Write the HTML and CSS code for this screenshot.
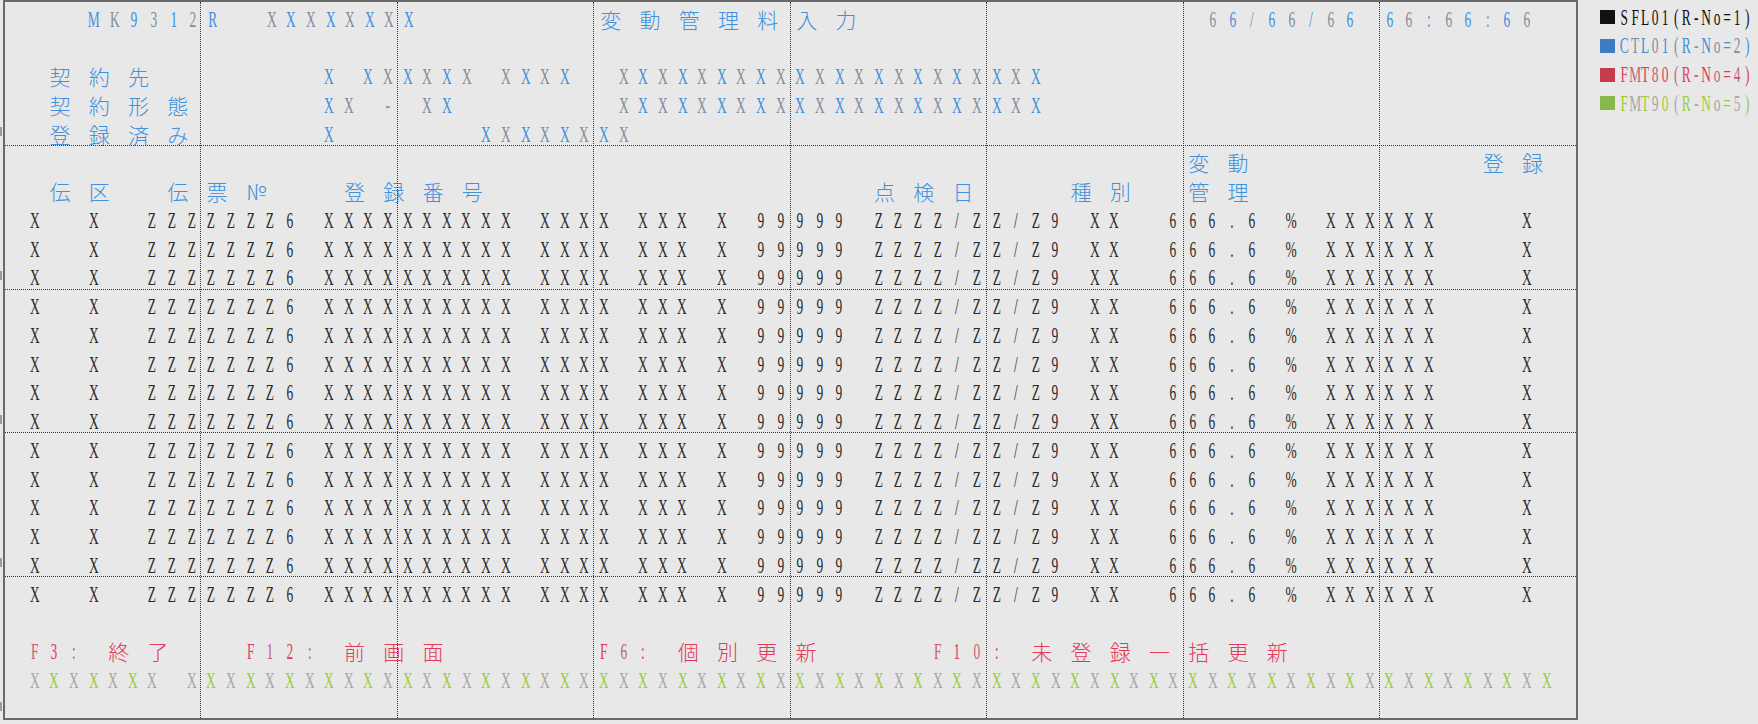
FILE: index.html
```html
<!DOCTYPE html>
<html lang="ja">
<head>
<meta charset="utf-8">
<title>MK9312R 変動管理料入力</title>
<link rel="stylesheet" href="styles.css">
</head>
<body>
<div class="page">
  <div class="ruler"><i></i><i></i><i></i><i></i><i></i></div>
  <div class="screen">
    <div class="vlines"><i></i><i></i><i></i><i></i><i></i><i></i><i></i><i></i></div>
    <div class="hlines"><i></i><i></i><i></i><i></i></div>
    <div class="line blue">    MK9312R  XXXXXXXX         変動管理料入力                 66/66/66 66:66:66</div>
    <div class="line"></div>
    <div class="line blue">  契約先        X XXXXXX XXXX  XXXXXXXXXXXXXXXXXXXXXX</div>
    <div class="line blue">  契約形態      XX - XX        XXXXXXXXXXXXXXXXXXXXXX</div>
    <div class="line blue">  登録済み      X       XXXXXXXX</div>
    <div class="line blue">                                                            変動           登録</div>
    <div class="line blue">  伝区  伝票№   登録番号                   点検日    種別  管理</div>
    <div class="line dark"> X  X  ZZZZZZZ6 XXXXXXXXXX XXXX XXX X 99999 ZZZZ/ZZ/Z9 XX  666.6 % XXXXXX    X</div>
    <div class="line dark"> X  X  ZZZZZZZ6 XXXXXXXXXX XXXX XXX X 99999 ZZZZ/ZZ/Z9 XX  666.6 % XXXXXX    X</div>
    <div class="line dark"> X  X  ZZZZZZZ6 XXXXXXXXXX XXXX XXX X 99999 ZZZZ/ZZ/Z9 XX  666.6 % XXXXXX    X</div>
    <div class="line dark"> X  X  ZZZZZZZ6 XXXXXXXXXX XXXX XXX X 99999 ZZZZ/ZZ/Z9 XX  666.6 % XXXXXX    X</div>
    <div class="line dark"> X  X  ZZZZZZZ6 XXXXXXXXXX XXXX XXX X 99999 ZZZZ/ZZ/Z9 XX  666.6 % XXXXXX    X</div>
    <div class="line dark"> X  X  ZZZZZZZ6 XXXXXXXXXX XXXX XXX X 99999 ZZZZ/ZZ/Z9 XX  666.6 % XXXXXX    X</div>
    <div class="line dark"> X  X  ZZZZZZZ6 XXXXXXXXXX XXXX XXX X 99999 ZZZZ/ZZ/Z9 XX  666.6 % XXXXXX    X</div>
    <div class="line dark"> X  X  ZZZZZZZ6 XXXXXXXXXX XXXX XXX X 99999 ZZZZ/ZZ/Z9 XX  666.6 % XXXXXX    X</div>
    <div class="line dark"> X  X  ZZZZZZZ6 XXXXXXXXXX XXXX XXX X 99999 ZZZZ/ZZ/Z9 XX  666.6 % XXXXXX    X</div>
    <div class="line dark"> X  X  ZZZZZZZ6 XXXXXXXXXX XXXX XXX X 99999 ZZZZ/ZZ/Z9 XX  666.6 % XXXXXX    X</div>
    <div class="line dark"> X  X  ZZZZZZZ6 XXXXXXXXXX XXXX XXX X 99999 ZZZZ/ZZ/Z9 XX  666.6 % XXXXXX    X</div>
    <div class="line dark"> X  X  ZZZZZZZ6 XXXXXXXXXX XXXX XXX X 99999 ZZZZ/ZZ/Z9 XX  666.6 % XXXXXX    X</div>
    <div class="line dark"> X  X  ZZZZZZZ6 XXXXXXXXXX XXXX XXX X 99999 ZZZZ/ZZ/Z9 XX  666.6 % XXXXXX    X</div>
    <div class="line dark"> X  X  ZZZZZZZ6 XXXXXXXXXX XXXX XXX X 99999 ZZZZ/ZZ/Z9 XX  666.6 % XXXXXX    X</div>
    <div class="line"></div>
    <div class="line red"> F3: 終了   F12: 前画面       F6: 個別更新     F10: 未登録一括更新</div>
    <div class="line green"> XXXXXXX X<!-- col 10 -->XXXXXXXXXX<!-- col 20 -->XXXXXXXXXX<!-- col 30 -->XXXXXXXXXX<!-- col 40 -->XXXXXXXXXX<!-- col 50 -->XXXXXXXXXX<!-- col 60 -->XXXXXXXXXX<!-- col 70 -->XXXXXXXXX</div>
  </div>
  <ul class="legend">
    <li class="legend-item"><span class="swatch sw-black"></span><span class="line dark">SFL01(R-No=1)</span></li>
    <li class="legend-item"><span class="swatch sw-blue"></span><span class="line blue">CTL01(R-No=2)</span></li>
    <li class="legend-item"><span class="swatch sw-red"></span><span class="line red">FMT80(R-No=4)</span></li>
    <li class="legend-item"><span class="swatch sw-green"></span><span class="line green">FMT90(R-No=5)</span></li>
  </ul>
</div>
<script src="script.js"></script>
</body>
</html>
```
FILE: styles.css
```css
* { box-sizing: border-box; }

html, body { margin: 0; padding: 0; }

body {
  background: #e8e8e8;
  font-family: "Liberation Serif", "Noto Sans CJK JP", serif;
}

.page {
  display: flex;
  align-items: flex-start;
  width: 1758px;
  height: 724px;
  overflow: hidden;
}

/* small row markers at the very left edge */
.ruler {
  width: 3px;
  flex: none;
  display: flex;
  flex-direction: column;
  gap: 134.75px;
  padding-top: 127px;
}
.ruler i {
  display: block;
  width: 2px;
  height: 9px;
  background: #9c9c9c;
}

/* 5250 screen frame: 80 columns x 24 rows */
.screen {
  position: relative;
  flex: none;
  width: 1574.8px;
  height: 720px;
  border: 2px solid #6a6a6a;
}

.vlines, .hlines {
  position: absolute;
  inset: 0;
  pointer-events: none;
}
.vlines { display: flex; }
.vlines i {
  flex: 1;
  border-right: 1px dotted #333333;
}
.vlines i:last-child { border-right: none; }

.hlines { display: flex; flex-direction: column; }
.hlines i {
  display: block;
  height: 143.75px;
  border-bottom: 1px dotted #333333;
}

.line {
  display: grid;
  grid-template-columns: repeat(80, 1fr);
  height: 28.75px;
}

.ch {
  grid-row: 1;
  display: flex;
  justify-content: center;
  padding-top: 5.5px;
  line-height: 22.75px;
  font-size: 24px;
  white-space: pre;
  transform: scaleX(0.56);
}
.ch.wide {
  font-family: "Noto Sans CJK JP", sans-serif;
  font-weight: 300;
  font-size: 21px;
  padding-right: 8px;
  transform: none;
}

.dark { color: #2a2a2a; }
.blue { color: #4090dc; }
.blue .odd { color: #828d99; }
.red { color: #e23a58; }
.red .odd { color: #c4606f; }
.green { color: #9ccc3a; }
.green .odd { color: #a6a6a6; }

/* legend of record formats */
.legend {
  list-style: none;
  margin: 0 0 0 22.7px;
  padding: 0;
  display: flex;
  flex-direction: column;
}
.legend-item {
  display: flex;
  align-items: flex-start;
  height: 28.75px;
}
.swatch {
  width: 15px;
  height: 14px;
  margin-top: 10px;
  margin-right: 4px;
  flex: none;
}
.sw-black { background: #111111; }
.sw-blue { background: #3d7cc0; }
.sw-red { background: #c43c4e; }
.sw-green { background: #88b84c; }

.legend .line {
  grid-template-columns: repeat(13, 10.26px);
}
.legend .dark { color: #111111; }
```
FILE: script.js
```js
// Lay every character of a screen line on the fixed 5250 column grid.
// Double-byte characters take two columns.
document.querySelectorAll('.line').forEach(function (line) {
  var text = line.textContent;
  line.textContent = '';
  var col = 0;
  Array.from(text).forEach(function (ch) {
    var wide = ch.charCodeAt(0) > 0x2000;
    var width = wide ? 2 : 1;
    if (ch !== ' ') {
      var cell = document.createElement('span');
      cell.className = 'ch' + (wide ? ' wide' : (col % 2 ? ' odd' : ''));
      cell.textContent = ch;
      cell.style.gridColumn = (col + 1) + ' / span ' + width;
      line.appendChild(cell);
    }
    col += width;
  });
});
```
